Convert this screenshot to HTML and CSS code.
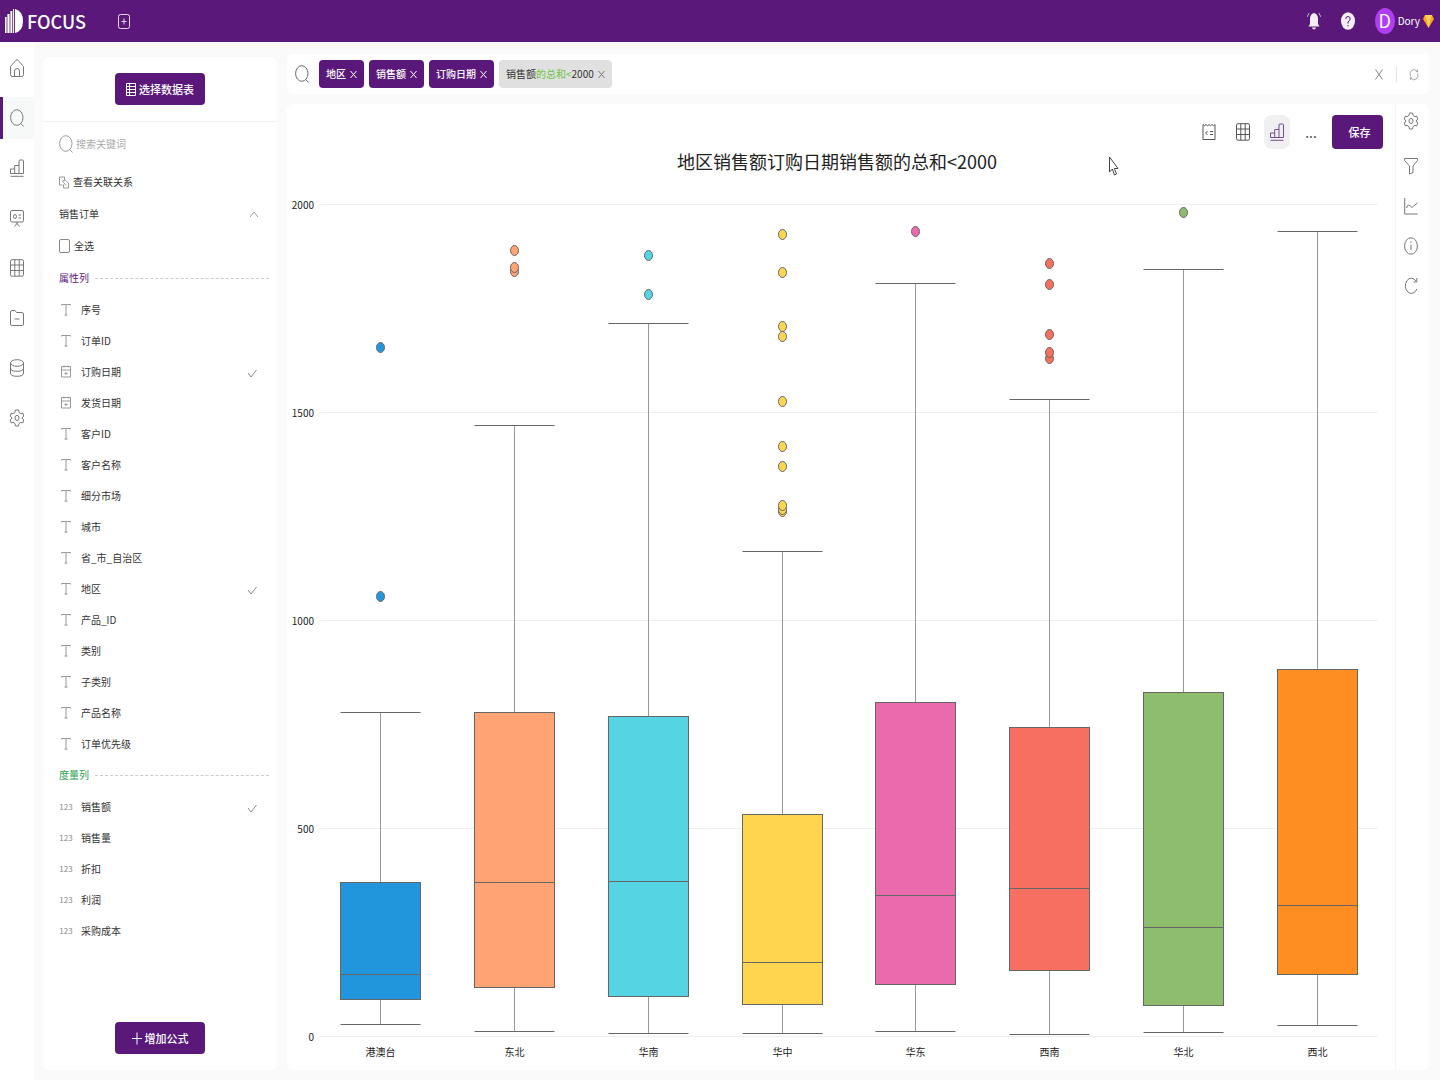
FILE: index.html
```html
<!DOCTYPE html>
<html lang="zh-CN">
<head>
<meta charset="utf-8">
<meta name="viewport" content="width=device-width, initial-scale=1">
<title>FOCUS</title>
<link rel="stylesheet" href="styles.css">
</head>
<body>
<svg class="sprite" aria-hidden="true">
  <symbol id="i-home" viewBox="0 0 14 18"><path d="M.5 7.500 6 1.200q1-1 2 0l5.500 6.300V15.500q0 2-1.700 2H2.200q-1.700 0-1.700-2ZM4.500 17.500V12q0-2.500 2.500-2.500T9.500 12v5.500"/></symbol>
  <symbol id="i-search" viewBox="0 0 14 18"><ellipse cx="6.800" cy="8.500" rx="6.200" ry="7.800"/><path d="m10.800 14.500 2.700 3"/></symbol>
  <symbol id="i-bars" viewBox="0 0 14 18"><path d="M.5 14.500V10H4.700M4.700 14.500V6.500H9M9 14.500V2q0-1 1-1h2.500q1 0 1 1v12.500H.500M.5 17.300h13"/></symbol>
  <symbol id="i-board" viewBox="0 0 14 18"><rect x=".5" y="1.500" width="13" height="11.500" rx="1.500"/><path d="M7 13v2M7 14.500l-2.500 3M7 14.500l2.500 3M8.500 6h2.500M8.500 9h2.500"/><ellipse cx="5" cy="7.500" rx="1.500" ry="2"/></symbol>
  <symbol id="i-grid" viewBox="0 0 14 18"><rect x=".5" y=".7" width="13" height="16.500" rx="1.500"/><path d="M.5 6h13M.5 11.500h13M4.800 1v16M9.200 1v16"/></symbol>
  <symbol id="i-folder" viewBox="0 0 14 18"><path d="M.5 3q0-1.500 1.300-1.500H5L6.500 3.500h5.700q1.300 0 1.300 1.500v10q0 1.500-1.300 1.500H1.800Q.5 16.500.5 15ZM4.500 10h5"/></symbol>
  <symbol id="i-db" viewBox="0 0 14 18"><ellipse cx="7" cy="4" rx="6.500" ry="3.300"/><path d="M.5 4v10q0 3.300 6.500 3.300t6.500-3.300V4M.5 9q0 3.300 6.500 3.300T13.500 9"/></symbol>
  <symbol id="i-gear" viewBox="0 0 14 18"><path d="M5.500 1h3l.6 2.500L11 4.700l1.800-.6L13.700 7 12 9l1.700 2-.9 2.900-1.800-.6-1.900 1.200-.6 2.500h-3L4.900 14.500 3 13.300l-1.800.6L.3 11 2 9 .3 7l.9-2.900L3 4.700l1.900-1.200Z"/><ellipse cx="7" cy="9" rx="2" ry="2.600"/></symbol>
  <symbol id="i-filter" viewBox="0 0 14 18"><path d="M.5 1.500h13v2L9 9v6.500L5.500 17V9L.500 3.500Z"/></symbol>
  <symbol id="i-line" viewBox="0 0 14 18"><path d="M.7 1v16h13M2.500 11q2-5 3.800-2t3.400 0L13.500 6"/></symbol>
  <symbol id="i-info" viewBox="0 0 14 18"><ellipse cx="7" cy="9" rx="6.400" ry="8.200"/><path d="M7 4.500V6M7 7.500V13"/></symbol>
  <symbol id="i-reload" viewBox="0 0 14 18"><path d="M12 4A6 7.600 0 1 0 12.800 12M12.800 1v4H9.500"/></symbol>
  <symbol id="i-cycle" viewBox="0 0 14 18"><path d="M2 11.500Q0 6 4 3t8 2M12 2v3H9.500M12 7.500q2 5-2 8T2 13.500M2 16.500v-3h2.500"/></symbol>
  <symbol id="i-formula" viewBox="0 0 14 18"><path d="M1 1.500v15h12v-15M1 1.500l1.500 1.200L4 1.500l1.500 1.200L7 1.500l1.500 1.200L10 1.500l1.500 1.200L13 1.500M5.500 8 3.500 10l2 1.500M8 8.500h3M8 11.500h3"/></symbol>
  <symbol id="i-sheet" viewBox="0 0 10 13"><path d="M.5.500h9v12h-9ZM.5 3.500h9M.5 6.500h9M.5 9.500h9M3.500.500v12"/></symbol>
  <symbol id="i-link" viewBox="0 0 10 13"><path d="M3.500 9H.500V1h5v3M4 4.500h2.500L9.500 7v5h-5V8.500M3 4.500l4 5"/></symbol>
  <symbol id="i-text" viewBox="0 0 10 13"><path d="M.5 2.500v-1h9v1M5 1.500v11M3.500 12h3"/></symbol>
  <symbol id="i-date" viewBox="0 0 10 13"><path d="M.5 1.500h9v10.500h-9ZM.5 5h9M3 .5v2M7 .5v2M3.500 8.500h3M5 7v3"/></symbol>
  <symbol id="i-check" viewBox="0 0 10 13"><path d="m1 8 3 4 5.500-7"/></symbol>
  <symbol id="i-up" viewBox="0 0 10 13"><path d="M1 9 5 4l4 5"/></symbol>
  <symbol id="i-x" viewBox="0 0 10 13"><path d="m1.500 1.500 7 10M8.500 1.500l-7 10"/></symbol>
  <symbol id="i-close" viewBox="0 0 7 9"><path d="m.5 1 6 7M6.500 1l-6 7"/></symbol>
  <symbol id="i-plus" viewBox="0 0 10 13"><path d="M5 .5v12M0 6.500h10"/></symbol>
</svg>

<header class="topbar">
  <a class="brand" href="#">
    <svg class="brand-mark" viewBox="0 0 18 24" aria-hidden="true"><path d="M0 8h1.600v16H0ZM2.400 5H4.600v19H2.400ZM5.400 2H7.300v22H5.400ZM8.100 0h1v24h-1ZM10 0q8 2 8 12t-8 12Z"/></svg>
    <span>FOCUS</span>
  </a>
  <button class="icon-button new-tab" type="button" aria-label="新建">
    <svg viewBox="0 0 12 15" width="12" height="15"><rect x=".5" y=".5" width="11" height="14" rx="2"/><path d="M6 4.500v6M3.500 7.500h5"/></svg>
  </button>
  <div class="account">
    <button class="icon-button" type="button" aria-label="通知">
      <svg class="solid" viewBox="0 0 14 18" width="14" height="18"><path d="M7 1q4 1 4 6v5l1.500 2.500h-11L3 12V7q0-5 4-6ZM5 15.500h4q-.5 2-2 2t-2-2ZM2.500 1 .5 5 0 4.500 2 .7ZM11.500 1l2 4 .5-.5L12 .7Z"/></svg>
    </button>
    <button class="icon-button" type="button" aria-label="帮助">
      <svg class="solid" viewBox="0 0 14 18" width="14" height="18"><ellipse cx="7" cy="9" rx="7" ry="8.700"/><path class="mark" d="M4.800 7Q4.800 4.500 7 4.500T9.200 7Q9.200 8.300 7 10v1.500M7 13v1.300"/></svg>
    </button>
    <button class="user" type="button">
      <span class="avatar">D</span>
      <span>Dory</span>
      <svg class="gem" viewBox="0 0 11 13" width="11" height="13" aria-hidden="true"><path fill="#f5a623" d="M2 0h7l2 4-5.500 9L0 4Z"/><path fill="#ffd15c" d="M2 0h7L7.500 4h-4ZM3.500 4h4l-2 9Z"/></svg>
    </button>
  </div>
</header>

<div class="workspace">
  <nav class="rail" aria-label="主导航">
    <a href="#" aria-label="首页"><svg class="icon"><use href="#i-home"/></svg></a>
    <a href="#" class="active" aria-label="搜索"><svg class="icon"><use href="#i-search"/></svg></a>
    <a href="#" aria-label="图表"><svg class="icon"><use href="#i-bars"/></svg></a>
    <a href="#" aria-label="看板"><svg class="icon"><use href="#i-board"/></svg></a>
    <a href="#" aria-label="数据表"><svg class="icon"><use href="#i-grid"/></svg></a>
    <a href="#" aria-label="文件夹"><svg class="icon"><use href="#i-folder"/></svg></a>
    <a href="#" aria-label="数据源"><svg class="icon"><use href="#i-db"/></svg></a>
    <a href="#" aria-label="设置"><svg class="icon"><use href="#i-gear"/></svg></a>
  </nav>

  <aside class="sidebar">
    <div class="sidebar-head">
      <button class="primary" type="button"><svg class="icon-sm"><use href="#i-sheet"/></svg>选择数据表</button>
    </div>
    <label class="search">
      <svg class="icon"><use href="#i-search"/></svg>
      <input type="search" placeholder="搜索关键词" aria-label="搜索关键词">
    </label>
    <a class="row" href="#"><svg class="icon-sm muted"><use href="#i-link"/></svg>查看关联关系</a>
    <button class="row spread" type="button" aria-expanded="true">销售订单<svg class="icon-sm muted"><use href="#i-up"/></svg></button>
    <label class="row"><input class="tick" type="checkbox">全选</label>

    <h2 class="group">属性列</h2>
    <ul class="fields">
      <li><svg class="icon-sm muted"><use href="#i-text"/></svg>序号</li>
      <li><svg class="icon-sm muted"><use href="#i-text"/></svg>订单ID</li>
      <li><svg class="icon-sm muted"><use href="#i-date"/></svg>订购日期<svg class="icon-sm chosen"><use href="#i-check"/></svg></li>
      <li><svg class="icon-sm muted"><use href="#i-date"/></svg>发货日期</li>
      <li><svg class="icon-sm muted"><use href="#i-text"/></svg>客户ID</li>
      <li><svg class="icon-sm muted"><use href="#i-text"/></svg>客户名称</li>
      <li><svg class="icon-sm muted"><use href="#i-text"/></svg>细分市场</li>
      <li><svg class="icon-sm muted"><use href="#i-text"/></svg>城市</li>
      <li><svg class="icon-sm muted"><use href="#i-text"/></svg>省_市_自治区</li>
      <li><svg class="icon-sm muted"><use href="#i-text"/></svg>地区<svg class="icon-sm chosen"><use href="#i-check"/></svg></li>
      <li><svg class="icon-sm muted"><use href="#i-text"/></svg>产品_ID</li>
      <li><svg class="icon-sm muted"><use href="#i-text"/></svg>类别</li>
      <li><svg class="icon-sm muted"><use href="#i-text"/></svg>子类别</li>
      <li><svg class="icon-sm muted"><use href="#i-text"/></svg>产品名称</li>
      <li><svg class="icon-sm muted"><use href="#i-text"/></svg>订单优先级</li>
    </ul>

    <h2 class="group measure">度量列</h2>
    <ul class="fields">
      <li><span class="num">123</span>销售额<svg class="icon-sm chosen"><use href="#i-check"/></svg></li>
      <li><span class="num">123</span>销售量</li>
      <li><span class="num">123</span>折扣</li>
      <li><span class="num">123</span>利润</li>
      <li><span class="num">123</span>采购成本</li>
    </ul>

    <div class="sidebar-foot">
      <button class="primary" type="button"><svg class="icon-sm"><use href="#i-plus"/></svg>增加公式</button>
    </div>
  </aside>

  <main class="content">
    <section class="query" aria-label="查询条件">
      <svg class="icon"><use href="#i-search"/></svg>
      <button class="chip" type="button">地区<svg class="close"><use href="#i-close"/></svg></button>
      <button class="chip" type="button">销售额<svg class="close"><use href="#i-close"/></svg></button>
      <button class="chip" type="button">订购日期<svg class="close"><use href="#i-close"/></svg></button>
      <button class="chip pending" type="button"><span>销售额<em>的总和&lt;</em>2000</span><svg class="close"><use href="#i-close"/></svg></button>
      <div class="query-actions">
        <button class="icon-button" type="button" aria-label="清空"><svg class="icon-sm"><use href="#i-x"/></svg></button>
        <button class="icon-button cycle" type="button" aria-label="刷新"><svg class="icon-sm"><use href="#i-cycle"/></svg></button>
      </div>
    </section>

    <section class="card">
      <div class="chart">
        <div class="toolbar">
          <button class="tool" type="button" aria-label="公式"><svg class="icon"><use href="#i-formula"/></svg></button>
          <button class="tool" type="button" aria-label="表格"><svg class="icon"><use href="#i-grid"/></svg></button>
          <button class="tool selected" type="button" aria-label="图表"><svg class="icon"><use href="#i-bars"/></svg></button>
          <button class="tool" type="button" aria-label="更多">...</button>
          <button class="primary save" type="button">保存</button>
        </div>
        <h1 class="chart-title">地区销售额订购日期销售额的总和&lt;2000</h1>
        <div class="plot"><svg id="plot" role="img" aria-label="各地区销售额箱线图"></svg></div>
        <svg class="pointer" viewBox="0 0 10 20" width="10" height="20" aria-hidden="true"><path d="M.5 1v15l2.800-3 2.200 6 2-1-2.200-5.500H9Z"/></svg>
      </div>
      <div class="side-tools">
        <button class="icon-button" type="button" aria-label="图表设置"><svg class="icon"><use href="#i-gear"/></svg></button>
        <button class="icon-button" type="button" aria-label="筛选"><svg class="icon"><use href="#i-filter"/></svg></button>
        <button class="icon-button" type="button" aria-label="趋势"><svg class="icon"><use href="#i-line"/></svg></button>
        <button class="icon-button" type="button" aria-label="信息"><svg class="icon"><use href="#i-info"/></svg></button>
        <button class="icon-button" type="button" aria-label="重新加载"><svg class="icon"><use href="#i-reload"/></svg></button>
      </div>
    </section>
  </main>
</div>
<script src="chart.js"></script>
</body>
</html>
```
FILE: styles.css
```css
:root {
  --purple: #5a197a;
  --ink: #333;
  --line: #f0f0f0;
}

* { box-sizing: border-box; }

body {
  margin: 0;
  min-height: 100vh;
  display: flex;
  flex-direction: column;
  background: #fafafb;
  color: var(--ink);
  font: 10px/16px "Noto Sans CJK SC", sans-serif;
}

button, input { font: inherit; color: inherit; }
button { border: 0; padding: 0; background: none; cursor: pointer; }
a { color: inherit; text-decoration: none; }
h1, h2, ul { margin: 0; padding: 0; font-weight: 400; list-style: none; }

svg { flex: none; fill: none; stroke: currentColor; stroke-width: 1; }
.sprite { display: none; }
.icon { width: 14px; height: 18px; }
.icon-sm { width: 10px; height: 13px; }
.muted { color: #999; }

.icon-button {
  display: flex;
  align-items: center;
  justify-content: center;
}

/* Top bar */
.topbar {
  display: flex;
  align-items: center;
  height: 42px;
  padding: 0 6px 0 5px;
  background: var(--purple);
  color: #fff;
}
.brand {
  display: flex;
  align-items: center;
  gap: 4px;
  font-size: 18px;
  font-weight: 500;
  line-height: 24px;
}
.brand-mark { width: 18px; height: 24px; fill: #fff; stroke: none; }
.new-tab { margin-left: 32px; color: #e6d8ee; }
.account { display: flex; align-items: center; gap: 20px; margin-left: auto; }
.solid { fill: #f4eef7; stroke: none; }
.solid .mark { fill: none; stroke: var(--purple); }
.user { display: flex; align-items: center; gap: 3px; }
.avatar {
  width: 20px;
  height: 26px;
  border-radius: 50%;
  background: #b03df5;
  font-size: 18px;
  line-height: 24px;
}
.gem { stroke: none; }

.workspace { flex: 1; display: flex; }

/* Left navigation */
.rail {
  flex: none;
  width: 34px;
  display: flex;
  flex-direction: column;
  gap: 8px;
  padding-top: 5px;
  background: #fff;
  color: #777;
}
.rail a {
  height: 42px;
  display: flex;
  align-items: center;
  justify-content: center;
}
.rail .active { background: #f7f9f9; box-shadow: inset 3px 0 var(--purple); }

/* Field list */
.sidebar {
  flex: none;
  width: 234px;
  margin: 15px 10px 10px 9px;
  display: flex;
  flex-direction: column;
  background: #fff;
  border-radius: 6px;
}
.sidebar-head {
  display: flex;
  justify-content: center;
  padding: 16px 0;
  border-bottom: 1px solid var(--line);
}
.primary {
  display: flex;
  align-items: center;
  justify-content: center;
  gap: 3px;
  height: 32px;
  width: 90px;
  border-radius: 4px;
  background: var(--purple);
  color: #fff;
  font-size: 11px;
  font-weight: 500;
}
.search {
  display: flex;
  align-items: center;
  gap: 3px;
  height: 44px;
  padding: 0 16px;
  color: #999;
}
.search input {
  flex: 1;
  min-width: 0;
  border: 0;
  padding: 0;
  outline: 0;
  background: none;
  appearance: none;
}
.search input::placeholder { color: #aaa; }
.row {
  display: flex;
  align-items: center;
  gap: 4px;
  height: 32px;
  padding: 0 16px;
}
.spread { justify-content: space-between; padding-right: 18px; }
.tick {
  appearance: none;
  width: 11px;
  height: 14px;
  margin: 0;
  border: 1px solid #888;
  border-radius: 2px;
}
.group {
  display: flex;
  align-items: center;
  gap: 6px;
  height: 32px;
  padding: 0 8px 0 16px;
  color: var(--purple);
  font-size: 10px;
}
.group::after { content: ""; flex: 1; border-top: 1px dashed #ccc; }
.measure { color: #2f9e4f; }
.fields li {
  display: flex;
  align-items: center;
  gap: 10px;
  height: 31px;
  padding: 0 20px 0 18px;
}
.num { width: 10px; color: #888; font-size: 8px; display: flex; justify-content: center; }
.chosen { margin-left: auto; color: #888; }
.sidebar-foot {
  display: flex;
  justify-content: center;
  margin-top: auto;
  padding: 16px 0;
}

/* Query bar */
.content {
  flex: 1;
  min-width: 0;
  display: flex;
  flex-direction: column;
  gap: 10px;
  padding: 12px 11px 10px 0;
}
.query {
  display: flex;
  align-items: center;
  gap: 5px;
  min-height: 40px;
  padding: 0 10px 0 8px;
  background: #fff;
  border-radius: 6px;
}
.query > .icon { margin-right: 5px; color: #666; }
.chip {
  display: flex;
  align-items: center;
  gap: 4px;
  height: 28px;
  padding: 0 7px;
  border-radius: 4px;
  background: var(--purple);
  color: #fff;
  font-weight: 500;
}
.close { width: 7px; height: 9px; }
.pending { background: #e0e0e0; color: var(--ink); font-weight: 400; }
.pending em { color: #6cc644; font-style: normal; }
.pending .close { color: #777; }
.query-actions { display: flex; align-items: center; margin-left: auto; color: #888; }
.cycle {
  height: 16px;
  margin-left: 12px;
  padding-left: 12px;
  border-left: 1px solid #e4e4e4;
}

/* Chart card */
.card { flex: 1; display: flex; background: #fff; border-radius: 6px; }
.chart {
  position: relative;
  flex: 1;
  min-width: 0;
  display: flex;
  flex-direction: column;
}
.toolbar {
  display: flex;
  align-items: center;
  justify-content: flex-end;
  gap: 8px;
  padding: 11px 12px 0 0;
}
.tool {
  display: flex;
  align-items: center;
  justify-content: center;
  width: 26px;
  height: 34px;
  border-radius: 8px;
  color: #555;
  font-size: 14px;
}
.selected { background: #f0eff1; color: #72508a; }
.save { width: 51px; height: 34px; padding-left: 4px; }
.chart-title {
  padding-right: 8px;
  color: #222;
  font-size: 18px;
  line-height: 24px;
  text-align: center;
}
.plot { flex: 1; min-height: 400px; display: flex; }
.plot svg { flex: 1; width: 100%; min-width: 0; }
.plot text { fill: #222; stroke: none; font-size: 10px; }
.plot .tick-label { text-anchor: end; }
.plot .category { text-anchor: middle; }
.grid-line { stroke: #eee; }
.stem { stroke: #999; }
.box, .whisker, .outlier { stroke: #666; }
.pointer {
  position: absolute;
  top: 52px;
  right: 276px;
  fill: #fff;
  stroke: #444;
}
.side-tools {
  flex: none;
  width: 34px;
  display: flex;
  flex-direction: column;
  gap: 16px;
  padding: 5px 4px 0 0;
  border-left: 1px solid #f4f4f4;
  color: #777;
}
.side-tools .icon-button { height: 24px; }
.side-tools .icon-button:first-child { margin-bottom: 5px; }
```
FILE: chart.js
```js
// Each series: five-number summary [low, q1, median, q3, high] plus outliers.
const series = [
  { name: "港澳台", color: "#2196dd", box: [30, 90, 148, 371, 780], outliers: [1657, 1058] },
  { name: "东北", color: "#ffa274", box: [12, 117, 371, 780, 1469], outliers: [1838, 1849, 1889] },
  { name: "华南", color: "#55d4e4", box: [8, 95, 373, 770, 1714], outliers: [1878, 1783] },
  { name: "华中", color: "#ffd54f", box: [8, 78, 178, 534, 1167], outliers: [1262, 1267, 1277, 1371, 1419, 1527, 1683, 1707, 1837, 1927] },
  { name: "华东", color: "#ea6bad", box: [13, 124, 340, 804, 1811], outliers: [1935] },
  { name: "西南", color: "#f66f60", box: [6, 159, 356, 743, 1531], outliers: [1630, 1645, 1688, 1808, 1857] },
  { name: "华北", color: "#8fbd6e", box: [10, 75, 263, 828, 1844], outliers: [1981] },
  { name: "西北", color: "#ff8e22", box: [26, 150, 316, 882, 1935], outliers: [] }
];

const svg = document.getElementById("plot");
const margin = { top: 31, right: 11, bottom: 34, left: 27 };
const maxValue = 2000;

function add(tag, attrs, text) {
  const node = document.createElementNS("http://www.w3.org/2000/svg", tag);
  for (const key in attrs) node.setAttribute(key, attrs[key]);
  if (text !== undefined) node.textContent = text;
  svg.appendChild(node);
}

function draw() {
  const { width, height } = svg.parentNode.getBoundingClientRect();
  const plotHeight = height - margin.top - margin.bottom;
  const band = (width - margin.left - margin.right) / series.length;
  const y = v => Math.round(margin.top + plotHeight * (1 - v / maxValue)) + 0.5;
  svg.replaceChildren();

  for (let v = 0; v <= maxValue; v += 500) {
    add("line", { class: "grid-line", x1: margin.left + 5, x2: width - margin.right - 6, y1: y(v), y2: y(v) });
    add("text", { class: "tick-label", x: margin.left, y: y(v) + 4 }, v);
  }

  series.forEach((s, i) => {
    const x = Math.floor(margin.left + band * (i + 0.5)) + 0.5;
    const half = Math.round(band * 0.3);
    const [low, q1, median, q3, high] = s.box;
    const line = (x1, y1, x2, y2, name = "whisker") => add("line", { class: name, x1, y1, x2, y2 });
    line(x, y(high), x, y(q3), "stem");
    line(x, y(q1), x, y(low), "stem");
    line(x - half, y(high), x + half, y(high));
    line(x - half, y(low), x + half, y(low));
    add("rect", { class: "box", x: x - half, y: y(q3), width: half * 2, height: y(q1) - y(q3), fill: s.color });
    line(x - half, y(median), x + half, y(median));
    s.outliers.forEach(v => add("ellipse", { class: "outlier", cx: x, cy: y(v), rx: 4, ry: 5, fill: s.color }));
    add("text", { class: "category", x, y: height - 14 }, s.name);
  });
}

draw();
window.addEventListener("resize", draw);
```
